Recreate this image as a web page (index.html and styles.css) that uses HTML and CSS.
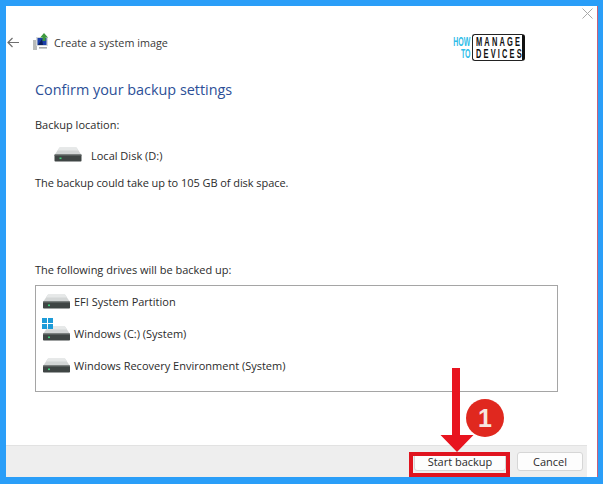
FILE: index.html
```html
<!DOCTYPE html>
<html lang="en">
<head>
<meta charset="utf-8">
<title>Create a system image</title>
<link rel="stylesheet" href="styles.css">
</head>
<body>
<svg class="defs" width="0" height="0" aria-hidden="true">
  <symbol id="drive" viewBox="0 0 27 15">
    <path d="M5 0.500H22L27 8H0Z" fill="#d3d6d6"/>
    <path d="M5 0.500H22L24 3.500H3Z" fill="#e6e8e8"/>
    <rect x="0" y="7.500" width="27" height="7" rx="0.800" fill="#3f4544"/>
    <rect x="0" y="7.500" width="27" height="1" fill="#6f7473"/>
    <rect x="5" y="10.500" width="2" height="1.600" fill="#3fd07a"/>
  </symbol>
</svg>
<div class="window">
  <header class="titlebar">
    <svg class="back" width="12" height="11" viewBox="0 0 12 11"><path d="M12 5.500H1M5.500 1L1 5.500L5.500 10" fill="none" stroke="#6f6f6f" stroke-width="1.200"/></svg>
    <svg class="appicon" width="17" height="18" viewBox="0 0 17 18">
      <rect x="0" y="7" width="4" height="10" fill="#b9bbb9"/>
      <rect x="3" y="4" width="12" height="9" fill="#d5d8da"/>
      <rect x="4.500" y="5" width="9" height="7" fill="#1b3fa8"/>
      <path d="M5 12L9 6L10 12Z" fill="#0d1f5c"/>
      <path d="M11 0L15 4.500H12.600V8H9.600V4.500H7.200Z" fill="#3f9a3f"/>
      <rect x="6" y="14" width="8" height="1.600" fill="#a8aaaa"/>
    </svg>
    <span class="title">Create a system image</span>
    <div class="logo">
      <div class="logo-how"><span>HOW</span><span>TO</span></div>
      <div class="logo-box"><span>MANAGE</span><span>DEVICES</span></div>
    </div>
    <svg class="close" width="11" height="11" viewBox="0 0 11 11"><path d="M0.500 0.500L10.500 10.500M10.500 0.500L0.500 10.500" stroke="#a9a9a9" stroke-width="1"/></svg>
  </header>
  <main class="content">
    <h1 class="heading">Confirm your backup settings</h1>
    <p class="label first">Backup location:</p>
    <div class="location">
      <svg class="drive-lg"><use href="#drive"/></svg>
      <span>Local Disk (D:)</span>
    </div>
    <p class="label size">The backup could take up to 105 GB of disk space.</p>
    <p class="label drives">The following drives will be backed up:</p>
    <ul class="drive-list">
      <li><svg class="drive"><use href="#drive"/></svg><span>EFI System Partition</span></li>
      <li>
        <span class="win-logo"><i></i><i></i><i></i><i></i></span>
        <svg class="drive"><use href="#drive"/></svg><span>Windows (C:) (System)</span>
      </li>
      <li><svg class="drive"><use href="#drive"/></svg><span>Windows Recovery Environment (System)</span></li>
    </ul>
  </main>
  <footer class="footer">
    <button class="btn start">Start backup</button>
    <button class="btn cancel">Cancel</button>
  </footer>
</div>
<div class="callout-box"></div>
<svg class="callout-arrow" width="34" height="85" viewBox="0 0 34 85"><path d="M12 0H20V67H33.500L17 84L0.500 67H12Z" fill="#e8141f"/></svg>
<div class="callout-badge">1</div>
</body>
</html>
```
FILE: styles.css
```css
* { box-sizing: border-box; }
html, body { margin: 0; padding: 0; }
body {
  position: relative;
  width: 603px;
  height: 484px;
  overflow: hidden;
  background: #2a9ef8;
  padding: 6px 5px 7px 6px;
  font-family: "Open Sans", "Noto Sans", sans-serif;
  font-size: 11px;
  color: #2b2b2b;
}
.defs { position: absolute; }
.window {
  display: flex;
  flex-direction: column;
  height: 471px;
  background: #fff;
  border-right: 1px solid #c8607a;
}
.titlebar {
  display: flex;
  align-items: center;
  height: 74px;
  flex: none;
  padding-left: 1px;
}
.appicon { margin: -2px 0 0 14px; }
.back { margin-top: -2px; }
.title { margin: -2px 0 0 4px; color: #3a3a3a; font-size: 10.800px; white-space: nowrap; }
.logo {
  display: flex;
  align-items: center;
  gap: 2px;
  margin: 9px 0 0 auto;
  font-family: "Liberation Sans", sans-serif;
  line-height: 12px;
}
.logo-how {
  display: flex;
  flex-direction: column;
  align-items: flex-end;
  width: 20px;
  color: #2fbde8;
  font-size: 12px;
  font-weight: 700;
}
.logo-how span { transform: scaleX(0.58); transform-origin: right center; white-space: nowrap; }
.logo-box {
  display: flex;
  flex-direction: column;
  width: 53px;
  height: 27px;
  padding: 1px 0 0 3px;
  border: 1px solid #222;
  border-right: 3px solid #111;
  border-radius: 3px;
  color: #111;
  font-size: 12px;
  font-weight: 700;
  letter-spacing: 3.500px;
}
.logo-box span { transform: scaleX(0.62); transform-origin: left center; white-space: nowrap; }
.close { flex: none; align-self: flex-start; margin: 2px 4px 0 57px; }
.content { flex: 1; padding-left: 29px; }
.heading {
  margin: 0;
  font-size: 14.400px;
  font-weight: 400;
  line-height: 20px;
  color: #2c4f97;
}
.label { margin: 0; line-height: 16px; }
.first { margin-top: 17px; }
.location {
  display: flex;
  align-items: center;
  height: 18px;
  margin: 12px 0 0 19px;
}
.location span { margin-left: 9px; margin-top: 3px; }
.drive-lg { width: 28px; height: 15px; }
.size { margin-top: 12px; letter-spacing: -0.060px; }
.drives { margin-top: 71px; }
.drive-list {
  display: flex;
  flex-direction: column;
  gap: 4px;
  width: 523px;
  height: 107px;
  margin: 7px 0 0;
  padding: 1px 0 0 7px;
  list-style: none;
  border: 1px solid #a5a5a5;
}
.drive-list li {
  position: relative;
  display: flex;
  align-items: center;
  gap: 4px;
  height: 28px;
}
.drive { width: 27px; height: 15px; margin-top: 1px; }
.win-logo {
  position: absolute;
  left: -1px;
  top: -1px;
  display: grid;
  grid-template-columns: 5px 5px;
  gap: 1px;
}
.win-logo i { height: 5px; background: #1d9bd8; }
.footer {
  display: flex;
  align-items: center;
  flex: none;
  height: 32px;
  margin-right: 10px;
  padding-left: 408px;
  gap: 11px;
  background: #eeeeee;
  border-top: 1px solid #e2e2e2;
}
.btn {
  height: 19px;
  padding: 0;
  border: 1px solid #d6d6d6;
  border-radius: 3px;
  background: #fdfdfd;
  font: inherit;
  color: #2b2b2b;
}
.start { width: 92px; }
.cancel { width: 66px; }
.callout-box {
  position: absolute;
  left: 409px;
  top: 452px;
  width: 101px;
  height: 25px;
  border: 4px solid #e0141f;
}
.callout-arrow { position: absolute; left: 440px; top: 368px; }
.callout-badge {
  position: absolute;
  left: 466px;
  top: 399px;
  width: 38px;
  height: 38px;
  border-radius: 50%;
  background: #e0281f;
  color: #f7e6e0;
  font-family: "Liberation Sans", sans-serif;
  font-size: 25px;
  font-weight: 700;
  line-height: 38px;
  text-align: center;
}
```
